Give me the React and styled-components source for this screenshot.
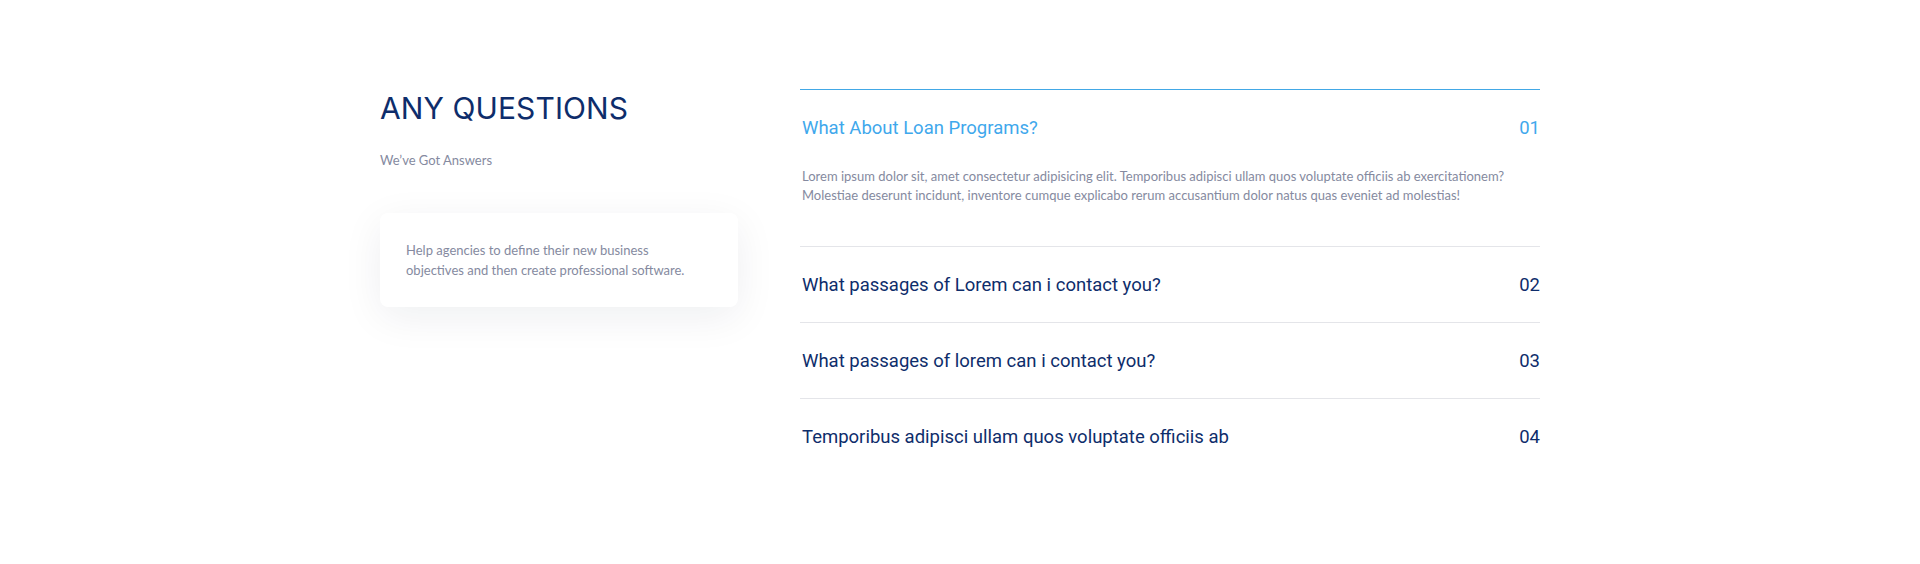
import styled, { createGlobalStyle } from 'styled-components';

const GlobalStyle = createGlobalStyle`
  html, body {
    margin: 0;
    padding: 0;
    background: #ffffff;
  }
  * {
    box-sizing: border-box;
  }
`;

const Section = styled.section`
  width: 100%;
  min-height: 564px;
  padding-top: 89px;
  background: #fff;
`;

const Container = styled.div`
  width: 1160px;
  margin: 0 auto;
  display: grid;
  grid-template-columns: 358px 740px;
  column-gap: 62px;
  align-items: start;
`;

const Intro = styled.div`
  display: flex;
  flex-direction: column;
  padding-top: 1px;
`;

const Title = styled.h2`
  margin: 0;
  font-family: Inter, 'Noto Sans', sans-serif;
  font-weight: 400;
  font-size: 30px;
  line-height: 36px;
  letter-spacing: 0.1px;
  color: #0e2d6b;
`;

const Subtitle = styled.p`
  margin: 24px 0 0;
  font-family: Lato, 'Open Sans', sans-serif;
  font-size: 13px;
  line-height: 20px;
  color: #858aa0;
`;

const Card = styled.div`
  margin-top: 43px;
  padding: 27px 26px;
  background: #fff;
  border-radius: 8px;
  box-shadow: 0 10px 40px rgba(20, 30, 60, 0.07);
`;

const CardText = styled.p`
  margin: 0;
  font-family: Lato, 'Open Sans', sans-serif;
  font-size: 13px;
  line-height: 20px;
  color: #858aa0;
`;

const List = styled.div`
  display: flex;
  flex-direction: column;
`;

const Item = styled.div`
  border-top: 1px solid ${({ $open }) => ($open ? '#42a8e6' : '#e4e5e9')};
`;

const Head = styled.div`
  height: 75px;
  display: flex;
  align-items: center;
  justify-content: space-between;
  padding-left: 2px;
  font-family: Roboto, 'Noto Sans', sans-serif;
  font-size: 18.5px;
  font-weight: 400;
  color: ${({ $open }) => ($open ? '#3fa8ec' : '#0e2d6b')};
  cursor: pointer;
`;

const Number = styled.span`
  font-variant-numeric: tabular-nums;
`;

const Answer = styled.p`
  margin: 0;
  padding: 2px 0 41px 2px;
  font-family: Lato, 'Open Sans', sans-serif;
  font-size: 13px;
  line-height: 19px;
  color: #858aa0;
`;

const faqs = [
  {
    q: 'What About Loan Programs?',
    a: [
      'Lorem ipsum dolor sit, amet consectetur adipisicing elit. Temporibus adipisci ullam quos voluptate officiis ab exercitationem?',
      'Molestiae deserunt incidunt, inventore cumque explicabo rerum accusantium dolor natus quas eveniet ad molestias!',
    ],
    open: true,
  },
  { q: 'What passages of Lorem can i contact you?' },
  { q: 'What passages of lorem can i contact you?' },
  { q: 'Temporibus adipisci ullam quos voluptate officiis ab' },
];

const App = () => {
  return (
    <>
      <GlobalStyle />
      <Section>
        <Container>
          <Intro>
            <Title>ANY QUESTIONS</Title>
            <Subtitle>We’ve Got Answers</Subtitle>
            <Card>
              <CardText>
                Help agencies to define their new business
                <br />
                objectives and then create professional software.
              </CardText>
            </Card>
          </Intro>
          <List>
            {faqs.map((f, i) => (
              <Item key={i} $open={f.open}>
                <Head $open={f.open}>
                  <span>{f.q}</span>
                  <Number>{String(i + 1).padStart(2, '0')}</Number>
                </Head>
                {f.open && (
                  <Answer>
                    {f.a[0]}
                    <br />
                    {f.a[1]}
                  </Answer>
                )}
              </Item>
            ))}
          </List>
        </Container>
      </Section>
    </>
  );
};

export default App;
